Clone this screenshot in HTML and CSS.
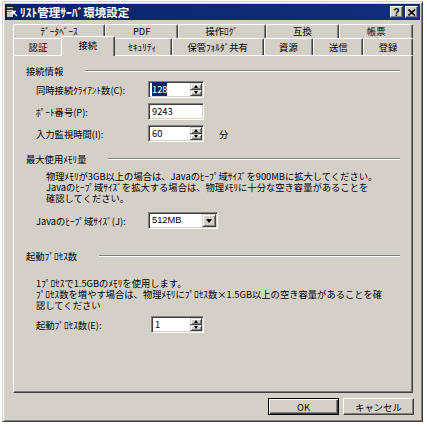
FILE: index.html
```html
<!DOCTYPE html>
<html lang="ja">
<head>
    <meta charset="UTF-8">
    <meta name="viewport" content="width=device-width, initial-scale=1.0">
    <title>ﾘｽﾄ管理ｻｰﾊﾞ環境設定</title>
    <link rel="stylesheet" href="styles.css">
</head>
<body>
    <div class="window">
        <div class="title-bar">
            <span class="title-icon">
                <svg width="12" height="12" viewBox="0 0 12 12">
                    <rect x="0.5" y="0.5" width="7" height="11" fill="#c8c8c8" stroke="#202020"/>
                    <rect x="1" y="2" width="6" height="2" fill="#404040"/>
                    <rect x="1" y="5" width="6" height="1" fill="#808080"/>
                    <path d="M6.5 5.5 L11 10 M6.5 5.5 V9 M6.5 5.5 H10" stroke="#fff" stroke-width="1.3" fill="none"/>
                </svg>
            </span>
            <span class="title-text">ﾘｽﾄ管理ｻｰﾊﾞ環境設定</span>
            <span class="caption-buttons">
                <span class="caption-btn help">?</span>
                <span class="caption-btn">
                    <svg width="8" height="7" viewBox="0 0 8 7">
                        <path d="M0.5 0.5 L7 6.5 M7 0.5 L0.5 6.5" stroke="#000" stroke-width="1.6"/>
                    </svg>
                </span>
            </span>
        </div>

        <div class="dialog-body">
            <div class="tabs">
                <div class="tab-row">
                    <div class="tab">ﾃﾞｰﾀﾍﾞｰｽ</div>
                    <div class="tab">PDF</div>
                    <div class="tab">操作ﾛｸﾞ</div>
                    <div class="tab">互換</div>
                    <div class="tab">帳票</div>
                </div>
                <div class="tab-row front">
                    <div class="tab">認証</div>
                    <div class="tab active">接続</div>
                    <div class="tab">ｾｷｭﾘﾃｨ</div>
                    <div class="tab">保管ﾌｫﾙﾀﾞ共有</div>
                    <div class="tab">資源</div>
                    <div class="tab">送信</div>
                    <div class="tab">登録</div>
                </div>
            </div>

            <div class="panel">
                <div class="group-title">接続情報</div>
                <div class="fields">
                    <div class="field">
                        <span class="field-label">同時接続ｸﾗｲｱﾝﾄ数(C):</span>
                        <span class="spin">
                            <span class="spin-value"><span class="selected">128</span></span>
                            <span class="spin-buttons">
                                <span class="spin-btn up"></span>
                                <span class="spin-btn down"></span>
                            </span>
                        </span>
                    </div>
                    <div class="field">
                        <span class="field-label">ﾎﾟｰﾄ番号(P):</span>
                        <span class="spin">
                            <span class="spin-value">9243</span>
                        </span>
                    </div>
                    <div class="field">
                        <span class="field-label">入力監視時間(I):</span>
                        <span class="spin">
                            <span class="spin-value">60</span>
                            <span class="spin-buttons">
                                <span class="spin-btn up"></span>
                                <span class="spin-btn down"></span>
                            </span>
                        </span>
                        <span class="unit">分</span>
                    </div>
                </div>

                <div class="group-title memory">最大使用ﾒﾓﾘ量</div>
                <div class="note">
                    <div class="note-line">物理ﾒﾓﾘが3GB以上の場合は、Javaのﾋｰﾌﾟ域ｻｲｽﾞを900MBに拡大してください。</div>
                    <div class="note-line">Javaのﾋｰﾌﾟ域ｻｲｽﾞを拡大する場合は、物理ﾒﾓﾘに十分な空き容量があることを</div>
                    <div class="note-line">確認してください。</div>
                </div>
                <div class="field heap">
                    <span class="field-label">Javaのﾋｰﾌﾟ域ｻｲｽﾞ(J):</span>
                    <span class="select">
                        <span class="select-value">512MB</span>
                        <span class="select-btn"></span>
                    </span>
                </div>

                <div class="group-title process">起動ﾌﾟﾛｾｽ数</div>
                <div class="note narrow">
                    <div class="note-line">1ﾌﾟﾛｾｽで1.5GBのﾒﾓﾘを使用します。</div>
                    <div class="note-line">ﾌﾟﾛｾｽ数を増やす場合は、物理ﾒﾓﾘにﾌﾟﾛｾｽ数×1.5GB以上の空き容量があることを確</div>
                    <div class="note-line">認してください</div>
                </div>
                <div class="field count">
                    <span class="field-label">起動ﾌﾟﾛｾｽ数(E):</span>
                    <span class="spin">
                        <span class="spin-value">1</span>
                        <span class="spin-buttons">
                            <span class="spin-btn up"></span>
                            <span class="spin-btn down"></span>
                        </span>
                    </span>
                </div>
            </div>

            <div class="footer">
                <button class="btn default">OK</button>
                <button class="btn">キャンセル</button>
            </div>
        </div>
    </div>
</body>
</html>
```

FILE: styles.css
```css
:root {
    --face: #d4d0c8;
    --light: #ffffff;
    --shadow: #808080;
    --dark: #404040;
    --title: #0a246a;
}

* {
    margin: 0;
    padding: 0;
    box-sizing: border-box;
}

body {
    background: #ffffff;
    font-family: "Noto Sans CJK JP", "Noto Sans", sans-serif;
    font-size: 9.3px;
    color: #000;
}

.window {
    margin: 1px 0 0 2px;
    width: 421px;
    height: 421px;
    padding: 2px;
    background: var(--face);
    border: 1px solid;
    border-color: var(--face) var(--dark) var(--dark) var(--face);
    box-shadow: inset 1px 1px var(--light), inset -1px -1px var(--shadow);
}

/* title bar */
.title-bar {
    height: 16px;
    display: flex;
    align-items: center;
    padding: 0 2px 0 1px;
    background: linear-gradient(to right, #0a246a, #122e7a);
    color: #fff;
}

.title-icon {
    display: flex;
    width: 12px;
    height: 12px;
}

.title-text {
    margin-left: 2px;
    font-weight: bold;
    font-size: 11.5px;
    line-height: 16px;
    white-space: nowrap;
}

.caption-buttons {
    margin-left: auto;
    display: flex;
    gap: 2px;
}

.caption-btn {
    width: 13px;
    height: 12px;
    display: flex;
    align-items: center;
    justify-content: center;
    background: var(--face);
    color: #000;
    font-family: "Liberation Sans", sans-serif;
    font-weight: bold;
    font-size: 10px;
    border: 1px solid;
    border-color: var(--light) var(--dark) var(--dark) var(--light);
    box-shadow: inset -1px -1px var(--shadow);
}

/* dialog */
.dialog-body {
    padding: 4px 7px 0 8px;
}

.tabs {
    display: flex;
    flex-direction: column;
}

.tab-row {
    display: flex;
    height: 14px;
}

.tab-row.front {
    height: 17px;
}

.tab {
    flex: 1 1 auto;
    text-align: center;
    line-height: 13px;
    white-space: nowrap;
    border: 1px solid;
    border-bottom: none;
    border-color: var(--light) var(--dark) transparent var(--light);
    border-radius: 2px 2px 0 0;
    box-shadow: inset -1px 0 var(--shadow);
    background: var(--face);
}

.tab-row.front .tab {
    line-height: 16px;
}

.tab.active {
    position: relative;
    z-index: 1;
    margin: -2px -2px -1px;
    padding: 0 2px;
    line-height: 16px;
}

.panel {
    height: 338px;
    padding: 9px 12px 0;
    border: 1px solid;
    border-color: var(--light) var(--dark) var(--dark) var(--light);
    box-shadow: inset -1px -1px var(--shadow);
}

.group-title {
    display: flex;
    align-items: center;
    gap: 22px;
    height: 12px;
    line-height: 12px;
    white-space: nowrap;
}

.group-title::after {
    content: "";
    flex: 1;
    border-top: 1px solid var(--shadow);
    border-bottom: 1px solid var(--light);
}

.group-title.memory {
    margin-top: 11px;
}

.group-title.process {
    margin-top: 21px;
}

.fields {
    margin-top: 4px;
    display: flex;
    flex-direction: column;
    gap: 5px;
}

.field {
    display: flex;
    align-items: center;
    height: 17px;
    padding-left: 10px;
}

.field-label {
    width: 112px;
    white-space: nowrap;
}

.field.heap {
    margin-top: 8px;
}

.field.count {
    margin-top: 5px;
}

.field.count .field-label {
    width: 115px;
}

/* sunken controls */
.spin,
.select {
    display: flex;
    height: 17px;
    width: 56px;
    padding: 1px;
    background: #fff;
    border: 1px solid;
    border-color: var(--shadow) var(--light) var(--light) var(--shadow);
    box-shadow: inset 1px 1px var(--dark), inset -1px -1px var(--face);
}

.field.count .spin {
    width: 53px;
}

.spin-value,
.select-value {
    flex: 1;
    padding-left: 2px;
    line-height: 13px;
}

.selected {
    background: var(--title);
    color: #fff;
}

.spin-buttons {
    width: 12px;
    display: flex;
    flex-direction: column;
}

.spin-btn,
.select-btn {
    flex: 1;
    display: flex;
    align-items: center;
    justify-content: center;
    background: var(--face);
    border: 1px solid;
    border-color: var(--face) var(--dark) var(--dark) var(--face);
    box-shadow: inset 1px 1px var(--light), inset -1px -1px var(--shadow);
}

.spin-btn::before,
.select-btn::before {
    content: "";
    border-left: 2.5px solid transparent;
    border-right: 2.5px solid transparent;
}

.spin-btn.up::before {
    border-bottom: 3px solid #000;
}

.spin-btn.down::before,
.select-btn::before {
    border-top: 3px solid #000;
}

.select {
    width: 70px;
}

.select-value {
    font-family: "Liberation Sans", sans-serif;
}

.select-btn {
    flex: 0 0 14px;
}

.select-btn::before {
    border-left-width: 3.5px;
    border-right-width: 3.5px;
    border-top-width: 4px;
}

.unit {
    margin-left: 15px;
}

.note {
    margin-top: 6px;
    padding-left: 20px;
    white-space: nowrap;
}

.note-line {
    height: 11px;
    line-height: 11px;
}

.note.narrow {
    margin-top: 16px;
    padding-left: 10px;
}

/* buttons */
.footer {
    display: flex;
    justify-content: flex-end;
    gap: 4px;
    margin: 5px -1px 0 0;
}

.btn {
    width: 71px;
    height: 17px;
    font: inherit;
    color: #000;
    background: var(--face);
    border: 1px solid;
    border-color: var(--light) var(--dark) var(--dark) var(--light);
    box-shadow: inset -1px -1px var(--shadow);
}

.btn.default {
    border-color: #000;
    box-shadow: inset 1px 1px var(--light), inset -1px -1px var(--dark), inset -2px -2px var(--shadow);
}
```
